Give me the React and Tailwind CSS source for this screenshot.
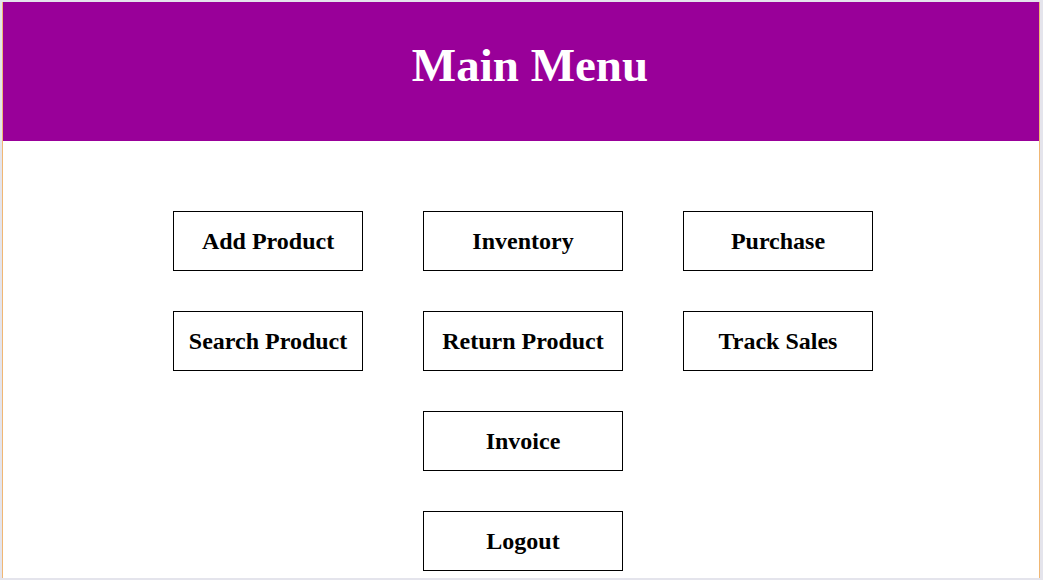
const rows = [
  ["Add Product", "Inventory", "Purchase"],
  ["Search Product", "Return Product", "Track Sales"],
  [null, "Invoice", null],
  [null, "Logout", null],
];

function MenuButton({ label, wide }) {
  return (
    <button
      type="button"
      className={`flex h-[60px] items-center justify-center border border-black bg-white text-[24px] font-bold text-black ${
        wide ? "w-[200px]" : "w-[190px]"
      }`}
    >
      {label}
    </button>
  );
}

export default function App() {
  return (
    <div
      className="h-[580px] w-[1043px] overflow-hidden bg-[#e4e4ec] pt-[2px] pl-[2px]"
      style={{ fontFamily: '"Liberation Serif", "Times New Roman", serif' }}
    >
      <div className="h-[576px] w-[1038px] border-l border-r border-[#f0b774] bg-white">
        <div className="flex h-[139px] items-center justify-center bg-[#990099] pl-[18px] pb-[12px]">
          <h1 className="text-[47px] font-bold text-white">Main Menu</h1>
        </div>
        <div className="flex flex-col gap-10 pt-[70px] pl-[170px]">
          {rows.map((row, i) => (
            <div key={i} className="flex gap-[60px]">
              {row.map((label, j) =>
                label ? (
                  <MenuButton key={j} label={label} wide={j === 1} />
                ) : (
                  <div key={j} className={j === 1 ? "w-[200px]" : "w-[190px]"} />
                )
              )}
            </div>
          ))}
        </div>
      </div>
    </div>
  );
}
